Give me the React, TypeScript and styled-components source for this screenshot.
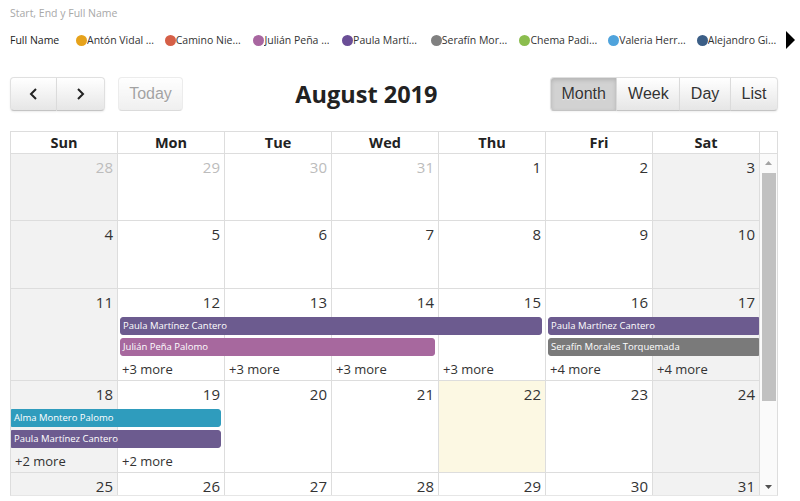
import styled, {createGlobalStyle, css} from 'styled-components'

const GlobalStyle = createGlobalStyle`
    html, body {
        margin: 0;
        padding: 0;
        background: #fff;
    }
    body {
        font-family: 'Open Sans', 'Noto Sans', sans-serif;
        color: #333;
    }
    * {
        box-sizing: border-box;
    }
`

type Person = {name: string; color: string}

const legend: Person[] = [
    {name: 'Antón Vidal ...', color: '#e6a21b'},
    {name: 'Camino Nie...', color: '#d55f47'},
    {name: 'Julián Peña ...', color: '#a866a0'},
    {name: 'Paula Martí...', color: '#6a4e96'},
    {name: 'Serafín Mor...', color: '#808080'},
    {name: 'Chema Padi...', color: '#8bbd4e'},
    {name: 'Valeria Herr...', color: '#4fa3dc'},
    {name: 'Alejandro Gi...', color: '#3b5e86'},
]

type CalEvent = {
    title: string
    color: string
    start: number
    end: number
    row: number
    notStart?: boolean
    notEnd?: boolean
}

type Week = {
    height: number
    days: {n: number; other?: boolean}[]
    events: CalEvent[]
    more: {col: number; count: number}[]
}

const PAULA = '#6c5b8f'
const days = (from: number) => Array.from({length: 7}, (_, i) => ({n: from + i}))

const weeks: Week[] = [
    {
        height: 67,
        days: [
            {n: 28, other: true},
            {n: 29, other: true},
            {n: 30, other: true},
            {n: 31, other: true},
            {n: 1},
            {n: 2},
            {n: 3},
        ],
        events: [],
        more: [],
    },
    {height: 68, days: days(4), events: [], more: []},
    {
        height: 92,
        days: days(11),
        events: [
            {title: 'Paula Martínez Cantero', color: PAULA, start: 2, end: 5, row: 1},
            {title: 'Julián Peña Palomo', color: '#a7689e', start: 2, end: 4, row: 2},
            {title: 'Paula Martínez Cantero', color: PAULA, start: 6, end: 7, row: 1, notEnd: true},
            {title: 'Serafín Morales Torquemada', color: '#7a7a7a', start: 6, end: 7, row: 2, notEnd: true},
        ],
        more: [
            {col: 2, count: 3},
            {col: 3, count: 3},
            {col: 4, count: 3},
            {col: 5, count: 3},
            {col: 6, count: 4},
            {col: 7, count: 4},
        ],
    },
    {
        height: 92,
        days: days(18),
        events: [
            {title: 'Alma Montero Palomo', color: '#2f9cbd', start: 1, end: 2, row: 1, notStart: true},
            {title: 'Paula Martínez Cantero', color: PAULA, start: 1, end: 2, row: 2, notStart: true},
        ],
        more: [
            {col: 1, count: 2},
            {col: 2, count: 2},
        ],
    },
    {height: 92, days: days(25), events: [], more: []},
]

const dayNames = ['Sun', 'Mon', 'Tue', 'Wed', 'Thu', 'Fri', 'Sat']
const TODAY = 22

export default function App() {
    return (
        <Page>
            <GlobalStyle />
            <Caption>Start, End y Full Name</Caption>
            <Legend>
                <LegendLabel>Full Name</LegendLabel>
                {legend.map((p) => (
                    <LegendItem key={p.name}>
                        <Dot color={p.color} />
                        <LegendText>{p.name}</LegendText>
                    </LegendItem>
                ))}
                <LegendArrow width="9" height="18" viewBox="0 0 9 18">
                    <polygon points="0,0 9,9 0,18" fill="#000" />
                </LegendArrow>
            </Legend>

            <Calendar>
                <Toolbar>
                    <ToolGroup>
                        <ButtonGroup>
                            <NavButton $first>
                                <svg width="9" height="12" viewBox="0 0 9 12">
                                    <polyline points="7,1 2,6 7,11" fill="none" stroke="#222" strokeWidth="2" />
                                </svg>
                            </NavButton>
                            <NavButton $last>
                                <svg width="9" height="12" viewBox="0 0 9 12">
                                    <polyline points="2,1 7,6 2,11" fill="none" stroke="#222" strokeWidth="2" />
                                </svg>
                            </NavButton>
                        </ButtonGroup>
                        <Button $disabled $single>Today</Button>
                    </ToolGroup>
                    <Title>August 2019</Title>
                    <ButtonGroup>
                        <Button $active $first>Month</Button>
                        <Button>Week</Button>
                        <Button>Day</Button>
                        <Button $last>List</Button>
                    </ButtonGroup>
                </Toolbar>

                <Table>
                    <HeadRow>
                        {dayNames.map((d) => (
                            <HeadCell key={d}>{d}</HeadCell>
                        ))}
                        <HeadSpacer />
                    </HeadRow>
                    <Body>
                        <Weeks>
                            {weeks.map((w, wi) => (
                                <WeekRow key={wi} $height={w.height}>
                                    {w.days.map((d, i) => (
                                        <BgCell
                                            key={'bg' + i}
                                            $col={i + 1}
                                            $weekend={i === 0 || i === 6}
                                            $today={!d.other && d.n === TODAY}
                                        />
                                    ))}
                                    {w.days.map((d, i) => (
                                        <DayNumber key={'n' + i} $col={i + 1} $other={d.other}>
                                            {d.n}
                                        </DayNumber>
                                    ))}
                                    {w.events.map((e, i) => (
                                        <EventBar
                                            key={'e' + i}
                                            $start={e.start}
                                            $end={e.end}
                                            $row={e.row}
                                            $color={e.color}
                                            $notStart={e.notStart}
                                            $notEnd={e.notEnd}
                                        >
                                            {e.title}
                                        </EventBar>
                                    ))}
                                    {w.more.map((m) => (
                                        <MoreLink key={'m' + m.col} $col={m.col}>
                                            +{m.count} more
                                        </MoreLink>
                                    ))}
                                </WeekRow>
                            ))}
                        </Weeks>
                        <ScrollBar>
                            <ScrollArrow>
                                <svg width="7" height="4" viewBox="0 0 7 4">
                                    <polygon points="0,4 3.5,0 7,4" fill="#a3a3a3" />
                                </svg>
                            </ScrollArrow>
                            <ScrollThumb />
                            <ScrollSpace />
                            <ScrollArrow>
                                <svg width="7" height="4" viewBox="0 0 7 4">
                                    <polygon points="0,0 3.5,4 7,0" fill="#505050" />
                                </svg>
                            </ScrollArrow>
                        </ScrollBar>
                    </Body>
                </Table>
            </Calendar>
        </Page>
    )
}

const Page = styled.div`
    padding: 6px 0 0 10px;
    width: 800px;
    height: 501px;
    overflow: hidden;
`

const Caption = styled.div`
    font-size: 10.5px;
    line-height: 14px;
    color: #a8a8a8;
`

const Legend = styled.div`
    display: flex;
    align-items: center;
    height: 20px;
    margin-top: 10px;
    width: 785px;
    font-size: 10.5px;
`

const LegendLabel = styled.div`
    width: 66px;
    color: #222;
`

const LegendItem = styled.div`
    display: flex;
    align-items: center;
    width: 88.7px;
    white-space: nowrap;
`

const Dot = styled.span`
    width: 11px;
    height: 11px;
    border-radius: 50%;
    background: ${(p) => p.color};
    flex: none;
`

const LegendText = styled.span`
    color: #333;
    overflow: hidden;
`

const LegendArrow = styled.svg`
    margin-left: auto;
    flex: none;
`

const Calendar = styled.div`
    width: 768px;
    margin-top: 27px;
`

const Toolbar = styled.div`
    display: flex;
    align-items: center;
    height: 34px;
`

const ToolGroup = styled.div`
    display: flex;
    gap: 13px;
`

const ButtonGroup = styled.div`
    display: flex;
`

const Title = styled.h2`
    flex: 1;
    margin: 0;
    text-align: center;
    font-size: 23.5px;
    font-weight: 700;
    color: #222;
    line-height: 34px;
`

type BtnProps = {$active?: boolean; $disabled?: boolean; $first?: boolean; $last?: boolean; $single?: boolean}

const Button = styled.div<BtnProps>`
    height: 34px;
    padding: 0 10.6px;
    display: flex;
    align-items: center;
    justify-content: center;
    font-family: 'Liberation Sans', Arial, sans-serif;
    font-size: 16px;
    color: #333;
    background: linear-gradient(#ffffff, #e6e6e6);
    border: 1px solid #e0e0e0;
    border-bottom-color: #c4c4c4;
    border-left-width: 0;
    box-shadow: inset 0 1px 0 rgba(255, 255, 255, 0.2), 0 1px 2px rgba(0, 0, 0, 0.08);
    text-shadow: 0 1px 1px rgba(255, 255, 255, 0.75);
    ${(p) => (p.$first || p.$single) && css`
        border-left-width: 1px;
        border-top-left-radius: 4px;
        border-bottom-left-radius: 4px;
    `}
    ${(p) => (p.$last || p.$single) && css`
        border-top-right-radius: 4px;
        border-bottom-right-radius: 4px;
    `}
    ${(p) => p.$active && css`
        background: #d2d2d2;
        box-shadow: inset 0 2px 4px rgba(0, 0, 0, 0.15), 0 1px 2px rgba(0, 0, 0, 0.05);
        color: #333;
    `}
    ${(p) => p.$disabled && css`
        opacity: 0.6;
        color: #666;
        box-shadow: none;
        width: 65px;
    `}
`

const NavButton = styled(Button)`
    width: ${(p) => (p.$first ? 47 : 48)}px;
    padding: 0;
`

const Table = styled.div`
    margin-top: 20px;
    border: 1px solid #ddd;
    border-bottom-color: #e6e6e6;
`

const HeadRow = styled.div`
    display: grid;
    grid-template-columns: repeat(7, 1fr) 17px;
    border-bottom: 1px solid #ddd;
`

const HeadCell = styled.div`
    height: 21px;
    line-height: 21px;
    text-align: center;
    font-weight: 700;
    font-size: 14.5px;
    color: #222;
    border-right: 1px solid #ddd;
`

const HeadSpacer = styled.div``

const Body = styled.div`
    display: flex;
    height: 341px;
    overflow: hidden;
`

const Weeks = styled.div`
    flex: 1;
    min-width: 0;
`

const WeekRow = styled.div<{$height: number}>`
    display: grid;
    grid-template-columns: repeat(7, 1fr);
    grid-template-rows: 28px auto auto auto 1fr;
    height: ${(p) => p.$height}px;
    border-bottom: 1px solid #ddd;
`

const BgCell = styled.div<{$col: number; $weekend?: boolean; $today?: boolean}>`
    grid-row: 1 / -1;
    grid-column: ${(p) => p.$col};
    border-right: 1px solid #ddd;
    background: ${(p) => (p.$today ? '#fcf8e3' : p.$weekend ? '#f2f2f2' : '#fff')};
`

const DayNumber = styled.div<{$col: number; $other?: boolean}>`
    grid-row: 1;
    grid-column: ${(p) => p.$col};
    text-align: right;
    padding: 3px 5px 0 0;
    font-size: 15px;
    line-height: 20px;
    color: ${(p) => (p.$other ? '#bcbcbc' : '#333')};
`

type EventProps = {
    $start: number
    $end: number
    $row: number
    $color: string
    $notStart?: boolean
    $notEnd?: boolean
}

const EventBar = styled.div<EventProps>`
    grid-column: ${(p) => p.$start} / ${(p) => p.$end + 1};
    grid-row: ${(p) => p.$row + 1};
    height: 18px;
    margin: 0 ${(p) => (p.$notEnd ? 1 : 4)}px 3px ${(p) => (p.$notStart ? 0 : 2)}px;
    padding-left: 2px;
    background: ${(p) => p.$color};
    border: 1px solid ${(p) => p.$color};
    border-radius: ${(p) => (p.$notStart ? '0' : '3px')} ${(p) => (p.$notEnd ? '0 0' : '3px 3px')} ${(p) => (p.$notStart ? '0' : '3px')};
    color: #fff;
    font-size: 9.5px;
    line-height: 16px;
    white-space: nowrap;
    overflow: hidden;
`

const MoreLink = styled.div<{$col: number}>`
    grid-row: 4;
    grid-column: ${(p) => p.$col};
    padding: 0 0 0 4px;
    font-size: 13px;
    line-height: 20px;
    color: #333;
`

const ScrollBar = styled.div`
    width: 17px;
    display: flex;
    flex-direction: column;
    align-items: center;
    background: #fafafa;
`

const ScrollArrow = styled.div`
    height: 17px;
    width: 100%;
    display: flex;
    align-items: center;
    justify-content: center;
`

const ScrollThumb = styled.div`
    width: 14px;
    height: 228px;
    margin-top: 2px;
    background: #c1c1c1;
`

const ScrollSpace = styled.div`
    flex: 1;
`
